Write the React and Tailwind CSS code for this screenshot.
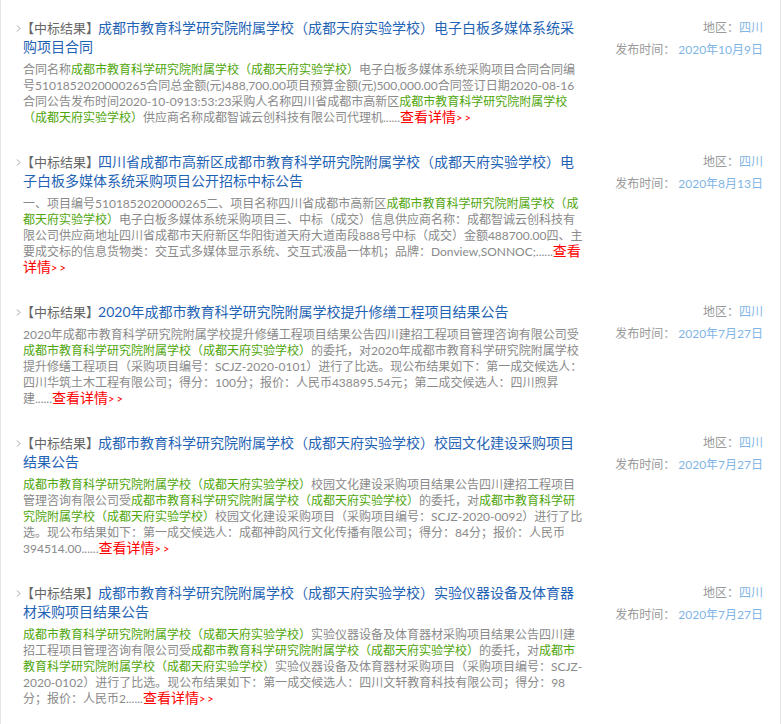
import React from 'react';

const SCHOOL = '成都市教育科学研究院附属学校（成都天府实验学校）';
const G = { g: SCHOOL };

const items = [
  {
    title: '成都市教育科学研究院附属学校（成都天府实验学校）电子白板多媒体系统采购项目合同',
    date: '2020年10月9日',
    desc: [
      '合同名称',
      G,
      '电子白板多媒体系统采购项目合同合同编号5101852020000265合同总金额(元)488,700.00项目预算金额(元)500,000.00合同签订日期2020-08-16合同公告发布时间2020-10-0913:53:23采购人名称四川省成都市高新区',
      G,
      '供应商名称成都智诚云创科技有限公司代理机......',
    ],
  },
  {
    title: '四川省成都市高新区成都市教育科学研究院附属学校（成都天府实验学校）电子白板多媒体系统采购项目公开招标中标公告',
    date: '2020年8月13日',
    desc: [
      '一、项目编号5101852020000265二、项目名称四川省成都市高新区',
      G,
      '电子白板多媒体系统采购项目三、中标（成交）信息供应商名称：成都智诚云创科技有限公司供应商地址四川省成都市天府新区华阳街道天府大道南段888号中标（成交）金额488700.00四、主要成交标的信息货物类：交互式多媒体显示系统、交互式液晶一体机；品牌：Donview,SONNOC;......',
    ],
  },
  {
    title: '2020年成都市教育科学研究院附属学校提升修缮工程项目结果公告',
    date: '2020年7月27日',
    desc: [
      '2020年成都市教育科学研究院附属学校提升修缮工程项目结果公告四川建招工程项目管理咨询有限公司受',
      G,
      '的委托，对2020年成都市教育科学研究院附属学校提升修缮工程项目（采购项目编号：SCJZ-2020-0101）进行了比选。现公布结果如下：第一成交候选人：四川华筑土木工程有限公司；得分：100分；报价：人民币438895.54元；第二成交候选人：四川煦昇建......',
    ],
  },
  {
    title: '成都市教育科学研究院附属学校（成都天府实验学校）校园文化建设采购项目结果公告',
    date: '2020年7月27日',
    desc: [
      G,
      '校园文化建设采购项目结果公告四川建招工程项目管理咨询有限公司受',
      G,
      '的委托，对',
      G,
      '校园文化建设采购项目（采购项目编号：SCJZ-2020-0092）进行了比选。现公布结果如下：第一成交候选人：成都神韵风行文化传播有限公司；得分：84分；报价：人民币394514.00......',
    ],
  },
  {
    title: '成都市教育科学研究院附属学校（成都天府实验学校）实验仪器设备及体育器材采购项目结果公告',
    date: '2020年7月27日',
    desc: [
      G,
      '实验仪器设备及体育器材采购项目结果公告四川建招工程项目管理咨询有限公司受',
      G,
      '的委托，对',
      G,
      '实验仪器设备及体育器材采购项目（采购项目编号：SCJZ-2020-0102）进行了比选。现公布结果如下：第一成交候选人：四川文轩教育科技有限公司；得分：98分；报价：人民币2......',
    ],
  },
];

const Chevron = () => (
  <svg className="absolute left-[15px] top-[7px]" width="5" height="7" viewBox="0 0 5 7">
    <polyline points="1,0.5 4,3.5 1,6.5" fill="none" stroke="#a0a0a0" strokeWidth="1" />
  </svg>
);

const ResultItem = ({ item }) => (
  <div className="flex pb-[26px]">
    <div className="relative w-[584px] shrink-0 pl-[22px]">
      <Chevron />
      <h3 className="text-[14px] leading-[19px] font-normal text-[#1f63b5]">
        <span className="ml-[-2px] mr-[-1px] text-[13px] leading-[13px] text-[#666]">【中标结果】</span>
        {item.title}
      </h3>
      <p className="mt-[6px] text-[12px] leading-[16px] text-[#8a8a8a]">
        {item.desc.map((seg, i) =>
          typeof seg === 'string' ? (
            <span key={i}>{seg}</span>
          ) : (
            <span key={i} className="text-[#4fa60c]">{seg.g}</span>
          )
        )}
        <span className="text-[14px] leading-[12px] text-[#ff0000]">查看详情</span>
        <span className="text-[11px] leading-[11px] tracking-[2px] text-[#ff0000]">&gt;&gt;</span>
      </p>
    </div>
    <div className="flex-1 pr-[17px] text-right text-[12px] leading-[19px] text-[#999]">
      <div>
        地区：<span className="text-[#7fb5e6]">四川</span>
      </div>
      <div className="mt-[3px]">
        发布时间： <span className="text-[#7fb5e6]">{item.date}</span>
      </div>
    </div>
  </div>
);

export default function App() {
  return (
    <div
      className="min-h-[724px] w-[781px] border-x border-[#e6e6e6] bg-white pt-[18px]"
      style={{ fontFamily: 'Lato, "Noto Sans CJK SC", sans-serif' }}
    >
      {items.map((item, i) => (
        <ResultItem key={i} item={item} />
      ))}
    </div>
  );
}
